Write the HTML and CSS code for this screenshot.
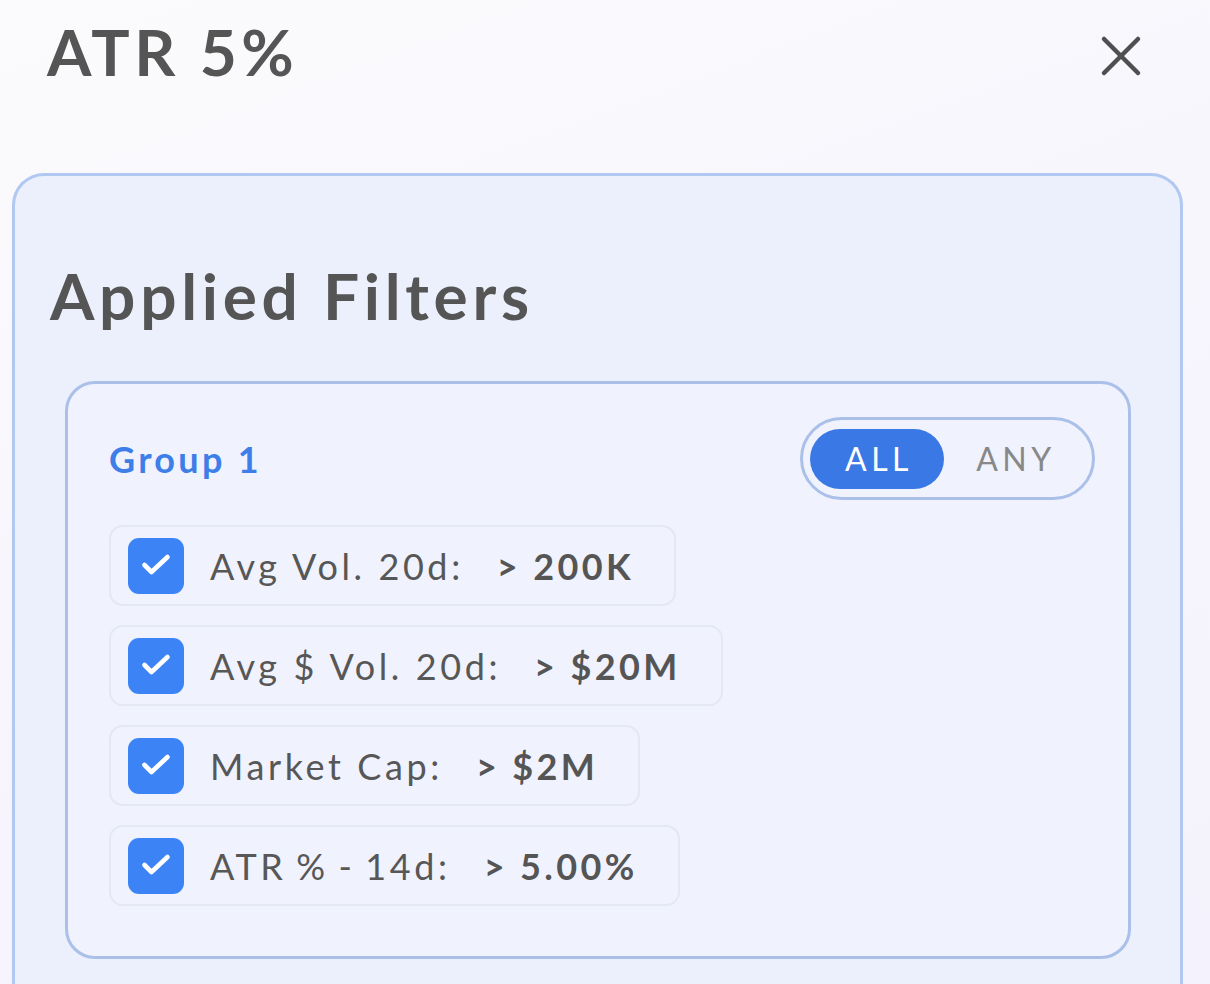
FILE: index.html
```html
<!DOCTYPE html>
<html>
<head>
<meta charset="utf-8">
<link rel="stylesheet" href="styles.css">
</head>
<body>
<div class="page">
  <header class="header">
    <h1 class="title">ATR 5%</h1>
    <button class="close" aria-label="Close">
      <svg width="44" height="44" viewBox="0 0 44 44"><path d="M5 5 L39 39 M39 5 L5 39" stroke="#4f4f4f" stroke-width="4.5" stroke-linecap="round" fill="none"/></svg>
    </button>
  </header>
  <section class="outer">
    <h2 class="section-title">Applied Filters</h2>
    <div class="group">
      <div class="group-head">
        <span class="group-name">Group 1</span>
        <div class="toggle">
          <span class="opt active">ALL</span>
          <span class="opt">ANY</span>
        </div>
      </div>
      <div class="chips">
        <div class="chip">
          <span class="check"><svg width="56" height="56" viewBox="0 0 56 56"><path d="M16.5 27 L23.5 34 L39.5 19" stroke="#fff" stroke-width="4.6" stroke-linecap="round" stroke-linejoin="round" fill="none"/></svg></span>
          <span class="label">Avg Vol. 20d:</span>
          <span class="value">&gt; 200K</span>
        </div>
        <div class="chip">
          <span class="check"><svg width="56" height="56" viewBox="0 0 56 56"><path d="M16.5 27 L23.5 34 L39.5 19" stroke="#fff" stroke-width="4.6" stroke-linecap="round" stroke-linejoin="round" fill="none"/></svg></span>
          <span class="label">Avg $ Vol. 20d:</span>
          <span class="value">&gt; $20M</span>
        </div>
        <div class="chip">
          <span class="check"><svg width="56" height="56" viewBox="0 0 56 56"><path d="M16.5 27 L23.5 34 L39.5 19" stroke="#fff" stroke-width="4.6" stroke-linecap="round" stroke-linejoin="round" fill="none"/></svg></span>
          <span class="label">Market Cap:</span>
          <span class="value">&gt; $2M</span>
        </div>
        <div class="chip">
          <span class="check"><svg width="56" height="56" viewBox="0 0 56 56"><path d="M16.5 27 L23.5 34 L39.5 19" stroke="#fff" stroke-width="4.6" stroke-linecap="round" stroke-linejoin="round" fill="none"/></svg></span>
          <span class="label tight">ATR % - 14d:</span>
          <span class="value">&gt; 5.00%</span>
        </div>
      </div>
    </div>
  </section>
</div>
</body>
</html>
```

FILE: styles.css
```css
* { box-sizing: border-box; }
html, body { margin: 0; padding: 0; height: 100%; overflow: hidden; }
body {
  font-family: "Lato", "Noto Sans", sans-serif;
  color: #545454;
  background: linear-gradient(160deg, #fbfbfd 0%, #f6f4fc 60%, #f4f2fc 100%);
}
.page { width: 1210px; height: 984px; }
.header {
  display: flex;
  justify-content: space-between;
  align-items: flex-start;
  padding: 12px 67px 0 47px;
  height: 173px;
}
.title {
  margin: 0;
  font-size: 64px;
  line-height: 80px;
  font-weight: 700;
  letter-spacing: 4.4px;
  color: #555;
}
.close {
  border: 0;
  background: none;
  padding: 0;
  margin-top: 22px;
  width: 44px;
  height: 44px;
}
.close svg { display: block; }
.outer {
  margin-left: 12px;
  width: 1171px;
  height: 830px;
  background: #ebf0fc;
  border: 3px solid #b0c8f2;
  border-bottom: 0;
  border-radius: 32px 32px 0 0;
  padding: 80px 0 0 35px;
}
.section-title {
  margin: 0;
  font-size: 64px;
  line-height: 80px;
  font-weight: 700;
  color: #555;
  letter-spacing: 4.7px;
}
.group {
  margin: 45px 0 0 15px;
  width: 1066px;
  height: 578px;
  background: #f0f2fd;
  border: 3px solid #aac0e9;
  border-radius: 30px;
  padding: 33px 33px 0 41px;
}
.group-head {
  display: flex;
  justify-content: space-between;
  align-items: center;
}
.group-name {
  font-size: 36px;
  font-weight: 700;
  color: #3d7ee8;
  letter-spacing: 3.3px;
}
.toggle {
  display: flex;
  align-items: center;
  width: 295px;
  height: 83px;
  border: 3px solid #aac0e9;
  border-radius: 42px;
  padding: 0 7px;
}
.opt {
  font-size: 32px;
  letter-spacing: 4.5px;
  text-indent: 4px;
  color: #888;
  width: 134px;
  height: 60px;
  display: flex;
  align-items: center;
  justify-content: center;
}
.opt.active {
  background: #3a78e6;
  color: #fff;
  border-radius: 30px;
}
.opt + .opt { width: 140px; }
.chips {
  display: flex;
  flex-direction: column;
  align-items: flex-start;
  gap: 19px;
  margin-top: 25px;
}
.chip {
  display: flex;
  align-items: center;
  height: 81px;
  border: 2px solid #e4e7f4;
  border-radius: 14px;
  padding: 0 40px 0 17px;
  font-size: 36px;
}
.check {
  width: 56px;
  height: 56px;
  border-radius: 11px;
  background: #3c83f6;
  margin-right: 26px;
  flex: none;
}
.check svg { display: block; }
.label { letter-spacing: 3.6px; color: #575757; }
.label.tight { word-spacing: -3px; }
.value { margin-left: 33px; font-weight: 700; color: #555; letter-spacing: 3.4px; }
```
